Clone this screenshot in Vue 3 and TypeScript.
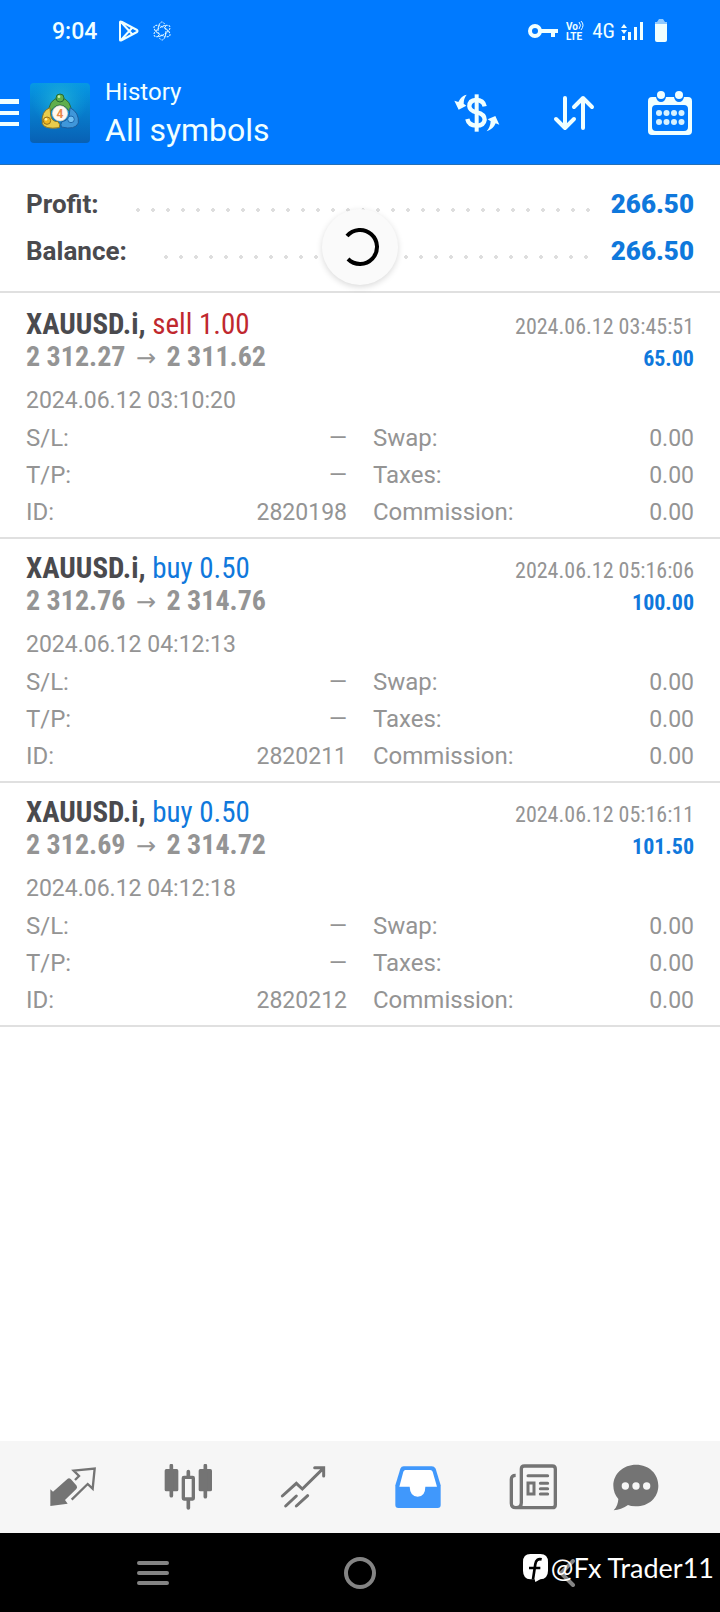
<script setup lang="ts">
interface Deal {
  symbol: string
  side: 'buy' | 'sell'
  volume: string
  openPrice: string
  closePrice: string
  openTime: string
  closeTime: string
  profit: string
  id: string
}

const totals = [
  { label: 'Profit:', value: '266.50' },
  { label: 'Balance:', value: '266.50' },
]

const deals: Deal[] = [
  { symbol: 'XAUUSD.i', side: 'sell', volume: '1.00', openPrice: '2 312.27', closePrice: '2 311.62', openTime: '2024.06.12 03:10:20', closeTime: '2024.06.12 03:45:51', profit: '65.00', id: '2820198' },
  { symbol: 'XAUUSD.i', side: 'buy', volume: '0.50', openPrice: '2 312.76', closePrice: '2 314.76', openTime: '2024.06.12 04:12:13', closeTime: '2024.06.12 05:16:06', profit: '100.00', id: '2820211' },
  { symbol: 'XAUUSD.i', side: 'buy', volume: '0.50', openPrice: '2 312.69', closePrice: '2 314.72', openTime: '2024.06.12 04:12:18', closeTime: '2024.06.12 05:16:11', profit: '101.50', id: '2820212' },
]

const details = (deal: Deal) => [
  { label: 'S/L:', value: '—' },
  { label: 'Swap:', value: '0.00' },
  { label: 'T/P:', value: '—' },
  { label: 'Taxes:', value: '0.00' },
  { label: 'ID:', value: deal.id },
  { label: 'Commission:', value: '0.00' },
]
</script>

<template>
  <div class="screen">
    <header class="top">
      <div class="status">
        <span class="clock">9:04</span>
        <svg class="play" width="22" height="22" viewBox="0 0 22 22" fill="none" stroke="currentColor" stroke-width="2" stroke-linejoin="round">
          <path d="M2 2 Q2 1 4 2 L19 10 Q20 11 19 12 L4 20 Q2 21 2 20 Z M3 2 L14 14 M3 20 L14 8" />
        </svg>
        <svg class="atom" width="20" height="20" viewBox="0 0 20 20" fill="none" stroke="currentColor" stroke-dasharray="2 1">
          <ellipse cx="10" cy="10" rx="4" ry="9" />
          <ellipse cx="10" cy="10" rx="4" ry="9" transform="rotate(60 10 10)" />
          <ellipse cx="10" cy="10" rx="4" ry="9" transform="rotate(120 10 10)" />
        </svg>
        <span class="spacer"></span>
        <svg class="key" width="30" height="14" viewBox="0 0 30 14" fill="none" stroke="currentColor" stroke-width="4">
          <circle cx="7" cy="7" r="5" />
          <path d="M12 7 H30 M25 7 V13" />
        </svg>
        <svg class="volte" width="18" height="20" viewBox="0 0 18 20" fill="currentColor">
          <text x="0" y="9" class="tiny">Vo</text>
          <text x="0" y="19" class="tiny">LTE</text>
          <path d="M13 1 Q16 4 13 8 M15 0 Q19 4 15 9" fill="none" stroke="currentColor" />
        </svg>
        <span class="net">4G</span>
        <svg class="signal" width="22" height="20" viewBox="0 0 22 20" fill="currentColor">
          <path d="M0 7 L3 3 L6 7 Z M0 9 L3 13 L6 9 Z M1 15 h3 v4 h-3 Z M7 11 h3 v8 h-3 Z M13 6 h3 v13 h-3 Z M19 1 h3 v18 h-3 Z" />
        </svg>
        <svg class="battery" width="12" height="24" viewBox="0 0 12 24" fill="currentColor">
          <path d="M0 5 V3 H2 L4 0 H8 L10 3 H12 V5 Z" opacity=".6" />
          <path d="M0 5 H12 V21 Q12 23 10 23 H2 Q0 23 0 21 Z" />
        </svg>
      </div>

      <div class="appbar">
        <button class="icon-btn menu" aria-label="Menu">
          <svg width="20" height="28" viewBox="0 0 20 28" fill="currentColor">
            <path d="M0 0 H19 V5 H0 Z M0 12 H19 V16 H0 Z M0 23 H19 V27 H0 Z" />
          </svg>
        </button>
        <svg class="logo" width="60" height="60" viewBox="0 0 180 180">
          <defs>
            <linearGradient id="tile" x1="0" y1="0" x2="0" y2="1">
              <stop offset="0" stop-color="#0698e4" />
              <stop offset="1" stop-color="#0860b4" />
            </linearGradient>
            <radialGradient id="glow">
              <stop offset="0" stop-color="#20b0d8" />
              <stop offset="1" stop-color="#10a0d8" stop-opacity="0" />
            </radialGradient>
          </defs>
          <rect width="180" height="180" rx="12" fill="url(#tile)" />
          <circle cx="90" cy="50" r="85" fill="url(#glow)" />
          <g stroke-width="3">
            <path d="M56 94 Q54 48 90 44 Q126 48 124 94 Q108 66 90 66 Q72 66 56 94 Z" fill="#5fae4c" stroke="#2b6b3a" />
            <path d="M60 74 Q32 84 37 122 Q44 140 88 134 Q92 124 84 116 Q64 116 62 96 Z" fill="#e8cc4c" stroke="#8a7424" />
            <path d="M120 74 Q148 88 145 120 Q136 142 94 132 Q90 124 96 116 Q116 112 118 94 Z" fill="#3f97da" stroke="#1c5c9c" />
            <circle cx="90" cy="45" r="12" fill="#62b04a" stroke="#246a34" />
            <circle cx="51" cy="113" r="11" fill="#f0b820" stroke="#95701c" />
            <circle cx="123" cy="109" r="10" fill="#70c0f4" stroke="#1d68ac" />
          </g>
          <circle cx="87" cy="41" r="4" fill="#c8f0a8" />
          <circle cx="48" cy="109" r="4" fill="#fff0a0" />
          <circle cx="90" cy="91" r="23" fill="#fff8f0" stroke="#d8d0c0" stroke-width="2" />
          <text x="90" y="104" class="four" text-anchor="middle">4</text>
        </svg>
        <div class="titles">
          <span class="section">History</span>
          <h1>All symbols</h1>
        </div>
        <button class="icon-btn" aria-label="Currency filter">
          <svg width="46" height="44" viewBox="0 0 138 132" fill="none" stroke="currentColor">
            <path d="M92 46 Q88 27 66 27 Q46 28 46 46 Q47 59 68 64 Q92 69 92 86 Q90 104 67 104 Q44 103 40 84" stroke-width="13" />
            <path d="M68 10 V122" stroke-width="12" />
            <g fill="currentColor" stroke="none">
              <path d="M38 11 Q22 13 13 33 L1 29 L14 56 L37 44 L29 38 Q29 22 38 11 Z" />
              <path d="M98 121 Q117 116 125 97 L136 101 L124 75 L101 85 L110 91 Q109 108 98 121 Z" />
            </g>
          </svg>
        </button>
        <button class="icon-btn" aria-label="Sort">
          <svg width="42" height="44" viewBox="0 0 42 44" fill="none" stroke="currentColor" stroke-width="4" stroke-linecap="round" stroke-linejoin="round">
            <path d="M12 7 V37 M3 28 L12 37 L21 28 M30 37 V7 M21 16 L30 7 L39 16" />
          </svg>
        </button>
        <button class="icon-btn" aria-label="Period">
          <svg width="44" height="44" viewBox="0 0 44 44" fill="currentColor">
            <path fill-rule="evenodd" d="M4 6 H8 Q9 11 13 11 Q17 11 18 6 H26 Q27 11 31 11 Q35 11 36 6 H40 Q44 6 44 10 V40 Q44 44 40 44 H4 Q0 44 0 40 V10 Q0 6 4 6 Z M8 14 Q4 14 4 18 V36 Q4 40 8 40 H36 Q40 40 40 36 V18 Q40 14 36 14 Z" />
            <circle cx="13" cy="4" r="4" /><circle cx="31" cy="4" r="4" />
            <g opacity=".9">
              <circle v-for="n in 8" :key="n" :cx="11 + ((n - 1) % 4) * 7.5" :cy="n > 4 ? 31 : 22" r="3" />
            </g>
          </svg>
        </button>
      </div>
    </header>

    <main>
      <section class="summary">
        <div v-for="t in totals" :key="t.label" class="total">
          <span>{{ t.label }}</span>
          <i class="dots"></i>
          <b>{{ t.value }}</b>
        </div>
        <div class="spinner" role="status" aria-label="Loading">
          <svg width="40" height="40" viewBox="0 0 40 40" fill="none" stroke="#000" stroke-width="4">
            <path d="M7 9 A17 17 0 1 1 8 32" />
          </svg>
        </div>
      </section>

      <article v-for="deal in deals" :key="deal.id" class="deal">
        <div class="line">
          <h2>{{ deal.symbol }}, <span :class="deal.side">{{ deal.side }} {{ deal.volume }}</span></h2>
          <time>{{ deal.closeTime }}</time>
        </div>
        <div class="line">
          <div class="prices">{{ deal.openPrice }} <span class="arrow">→</span> {{ deal.closePrice }}</div>
          <b class="profit">{{ deal.profit }}</b>
        </div>
        <time class="opened">{{ deal.openTime }}</time>
        <dl>
          <div v-for="d in details(deal)" :key="d.label">
            <dt>{{ d.label }}</dt>
            <dd>{{ d.value }}</dd>
          </div>
        </dl>
      </article>
    </main>

    <nav class="tabs">
      <button aria-label="Quotes">
        <svg width="48" height="48" viewBox="0 0 144 144">
          <path d="M4 76 L12 83 L56 44 Q61 41 66 46 L83 65 Q86 70 82 75 L48 108 L56 119 L4 126 Z" fill="currentColor" />
          <path d="M78 48 L90 36 L74 20 L137 14 L131 74 L116 60 L68 107" fill="none" stroke="currentColor" stroke-width="7" />
        </svg>
      </button>
      <button aria-label="Charts">
        <svg width="48" height="48" viewBox="0 0 144 144" fill="currentColor">
          <rect x="2" y="15" width="41" height="67" rx="5" /><rect x="104" y="15" width="40" height="67" rx="5" />
          <path d="M22 5 V95 M124 5 V98 M73 23 V42 M73 105 V132" stroke="currentColor" stroke-width="11" stroke-linecap="round" />
          <rect x="58" y="40" width="30" height="65" rx="2" fill="#f6f6f6" stroke="currentColor" stroke-width="10" />
        </svg>
      </button>
      <button aria-label="Trade">
        <svg width="48" height="48" viewBox="0 0 144 144" fill="none" stroke="currentColor" stroke-width="9" stroke-linecap="round">
          <path d="M10 96 L52 58 L70 75 L132 14 M107 11 H134 V36 M20 126 L52 96 M52 126 L86 95" />
        </svg>
      </button>
      <button class="active" aria-label="History" aria-current="page">
        <svg width="48" height="48" viewBox="0 0 144 144">
          <path fill="currentColor" d="M29 7 H113 Q121 7 125 14 L140 64 V123 Q140 132 131 132 H13 Q4 132 4 123 V64 L19 14 Q22 7 29 7 Z" />
          <path fill="#fff" d="M34 18 H109 Q114 18 116 23 L129 68 H94 Q94 97 71 98 Q48 97 47 68 H16 L28 23 Q30 18 34 18 Z" />
        </svg>
      </button>
      <button aria-label="News">
        <svg width="48" height="48" viewBox="0 0 144 144" fill="none" stroke="currentColor" stroke-width="10">
          <path d="M20 34 Q7 34 7 46 V118 Q7 131 20 131 H130 Q139 131 139 122 V15 Q139 6 130 6 H46 Q37 6 37 15 V116 Q37 130 22 131" />
          <path d="M57 35 H116 M94 58 H116 M94 74 H116 M94 90 H116" stroke-width="9" stroke-linecap="round" />
          <rect x="57" y="57" width="18" height="33" stroke-width="9" />
        </svg>
      </button>
      <button aria-label="Chat">
        <svg width="48" height="48" viewBox="0 0 144 144" fill="currentColor">
          <path d="M72 2 C112 2 139 30 139 65 C139 102 108 128 70 127 Q56 127 48 123 Q27 138 5 139 Q18 126 19 105 Q4 87 4 65 C4 29 34 2 72 2 Z" />
          <g fill="#f6f6f6"><circle cx="40" cy="66" r="11" /><circle cx="72" cy="66" r="11" /><circle cx="104" cy="66" r="11" /></g>
        </svg>
      </button>
    </nav>

    <footer class="system">
      <button aria-label="Recent apps">
        <svg width="34" height="28" viewBox="0 0 34 28" fill="none" stroke="currentColor" stroke-width="4" stroke-linecap="round">
          <path d="M3 4 H31 M3 14 H31 M3 24 H31" />
        </svg>
      </button>
      <button aria-label="Home">
        <svg width="34" height="34" viewBox="0 0 34 34" fill="none" stroke="currentColor" stroke-width="4"><circle cx="17" cy="17" r="14" /></svg>
      </button>
      <button aria-label="Back">
        <svg width="18" height="28" viewBox="0 0 18 28" fill="none" stroke="currentColor" stroke-width="4" stroke-linecap="round">
          <path d="M15 2 L3 14 L15 26" />
        </svg>
      </button>
      <div class="watermark">
        <svg width="25" height="28" viewBox="0 0 75 84">
          <path fill="#fff" d="M22 0 H52 Q75 0 75 24 V50 Q75 74 52 76 L37 84 L35 76 H22 Q0 74 0 50 V24 Q0 0 22 0 Z" />
          <path d="M56 16 Q40 12 37 30 L30 76 M18 42 H52" fill="none" stroke="#000" stroke-width="8" />
        </svg>
        <span>@Fx Trader11</span>
      </div>
    </footer>
  </div>
</template>

<style>
body {
  margin: 0;
  background: #fff;
}
</style>

<style scoped>
.screen {
  min-height: 100vh;
  display: flex;
  flex-direction: column;
  font-family: Roboto, "Liberation Sans", sans-serif;
  color: #949494;
}
button {
  border: 0;
  padding: 0;
  background: none;
  color: inherit;
  font: inherit;
}
svg {
  display: block;
  flex: none;
}
h1, h2, dl, dd {
  margin: 0;
  font-weight: 400;
}
.top {
  background: #007aff;
  color: #f0ffff;
  border-bottom: 1px solid #2470b8;
}
.status {
  display: flex;
  align-items: center;
  height: 62px;
  padding: 0 53px 0 52px;
}
.clock {
  font-size: 23px;
  font-weight: 500;
}
.play {
  margin-left: 21px;
}
.atom {
  margin-left: 12px;
}
.spacer {
  flex: 1;
}
.volte {
  margin-left: 8px;
}
.tiny {
  font-size: 10px;
  font-weight: 700;
}
.net {
  margin-left: 8px;
  font: 21px "Roboto Condensed", "Liberation Sans Narrow", sans-serif;
}
.signal {
  margin-left: 6px;
}
.battery {
  margin-left: 12px;
}
.appbar {
  display: flex;
  align-items: center;
  height: 102px;
  padding-right: 28px;
}
.logo {
  margin-left: 10px;
}
.four {
  font: 700 36px Roboto, sans-serif;
  fill: #e88848;
}
.titles {
  flex: 1;
  margin-left: 15px;
}
.section {
  display: block;
  font-size: 24px;
  line-height: 34px;
}
h1 {
  font-size: 32px;
  line-height: 42px;
}
.icon-btn + .icon-btn {
  margin-left: 53px;
}
main {
  flex: 1;
}
.summary {
  position: relative;
  margin-bottom: 2px;
  padding: 16px 26px;
  border-bottom: 2px solid #e0e0e0;
}
.total {
  display: flex;
  align-items: center;
  font-size: 26px;
  font-weight: 700;
  line-height: 47px;
  color: #4a4a4e;
}
.total b {
  color: #0f78dc;
}
.dots {
  flex: 1;
  height: 4px;
  margin: 10px 21px 0 37px;
  background: radial-gradient(circle at 2px 2px, #dedede 2px, transparent 2px) 0 0 / 15px 4px repeat-x;
}
.spinner {
  position: absolute;
  top: 44px;
  left: calc(50% - 38px);
  display: grid;
  place-items: center;
  width: 76px;
  height: 76px;
  border-radius: 50%;
  background: #fafafa;
  box-shadow: 0 2px 6px rgba(0, 0, 0, 0.15);
}
.deal {
  padding: 13px 26px 0;
  border-bottom: 2px solid #e0e0e0;
  font-size: 23px;
}
.line {
  display: flex;
  justify-content: space-between;
  align-items: baseline;
  line-height: 28px;
  font-family: "Roboto Condensed", "Liberation Sans Narrow", sans-serif;
}
.line time {
  font-size: 22px;
}
h2, .prices {
  font-size: 29px;
  font-weight: 700;
  line-height: 32px;
}
h2 {
  color: #4a4a4e;
}
h2 span {
  font-weight: 400;
}
.prices {
  font-size: 28px;
}
.sell {
  color: #c0282e;
}
.buy {
  color: #0f78dc;
}
.arrow {
  margin: 0 4px;
  font-family: Roboto, "DejaVu Sans", sans-serif;
  font-size: 24px;
  font-weight: 400;
  line-height: 1;
}
.profit {
  font-size: 22px;
  color: #0f78dc;
}
.opened {
  display: block;
  margin-top: 9px;
  line-height: 38px;
}
dl {
  display: grid;
  grid-template-columns: 1fr 1fr;
  column-gap: 26px;
  padding-bottom: 6px;
}
dl div {
  display: flex;
  justify-content: space-between;
  line-height: 37px;
}
dt {
  font-size: 24px;
}
.tabs {
  display: grid;
  grid-template-columns: repeat(5, 5fr) 4fr;
  height: 90px;
  padding: 2px 38px 0 15px;
  background: #f6f6f6;
  color: #747474;
}
.tabs button, .system button {
  display: grid;
  place-items: center;
}
.tabs .active {
  color: #4098fc;
}
.system {
  position: relative;
  display: grid;
  grid-template-columns: repeat(3, 1fr);
  height: 79px;
  padding: 0 50px;
  background: #000;
  color: #848484;
}
.watermark {
  position: absolute;
  right: 6px;
  top: 17px;
  display: flex;
  align-items: center;
  gap: 3px;
  font: 27px/36px Lato, "Noto Sans", sans-serif;
  color: #fff;
}
</style>
